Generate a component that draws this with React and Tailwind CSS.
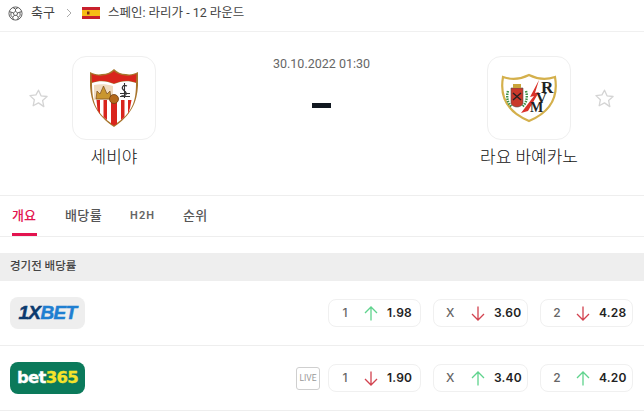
const KR = "font-['Roboto','Noto_Sans_CJK_KR',sans-serif]";

function Star() {
  return (
    <svg width="21" height="21" viewBox="0 0 24 24" fill="none" stroke="#d4d4d4" strokeWidth="1.5" strokeLinejoin="round" className="shrink-0">
      <path d="M12 2.500l2.900 6.400 6.900.8-5.100 4.700 1.400 6.900L12 17l-6.100 3.300 1.400-6.900-5.100-4.700 6.900-.8z" />
    </svg>
  );
}

function Ball() {
  return (
    <svg width="15" height="15" viewBox="0 0 24 24" fill="none" stroke="#555" strokeWidth="1.500" strokeLinejoin="round">
      <circle cx="12" cy="12" r="10.500" />
      <path d="M12 8.500l3.400 2.500-1.300 4H9.900l-1.300-4z" />
      <path d="M12 8.500V5M15.400 11l3.600-1.200M14.100 15l2.300 3M9.900 15l-2.300 3M8.600 11L5 9.800M8 2.500L12 5l4-2.500M19 9.800l2.500-.8M19 9.800l.5 5.500M5 9.800L2.500 9M5 9.800l-.5 5.500M16.400 18l3-2.700M7.600 18l-3-2.700M16.400 18l-1 4M7.600 18l1 4" />
    </svg>
  );
}

function Flag() {
  return (
    <svg width="18" height="12" viewBox="0 0 18 12" className="shrink-0">
      <rect width="18" height="12" fill="#c8202c" />
      <rect y="3" width="18" height="6" fill="#f6bd16" />
      <rect x="5" y="4.500" width="2.500" height="3" fill="#7a2a18" />
    </svg>
  );
}

function Sevilla() {
  return (
    <svg width="48" height="58" viewBox="0 0 48 58">
      <path d="M0 3c4 2 8 3 12 2 5 0 9-2 12-5 3 3 7 5 12 5 4 1 8 0 12-2 1 24-2 40-24 55C2 43-1 27 0 3z" fill="#a8752c" />
      <path d="M1.500 5c4 1.500 7 2 11 1.500 5-.5 9-2 11.500-4.500 2.500 2.500 6.500 4 11.500 4.500 4 .5 7 0 11-1.500l-.5 8.500c-8-3-15-2-22 1-7-3-14-4-22-1z" fill="#d9251d" />
      <path d="M2 14c8-3 15-2 22 1 7-3 14-4 22-1 0 18-3 30-22 42C5 44 2 32 2 14z" fill="#fff" />
      <path d="M6.500 31h3.500v14l-2.500-4zM13.500 31H17v20l-3.500-3zM21 31h6v24l-3 1.500-3-1.500zM31 31h3.500v17L31 51zM38 31h3.500l-1.500 8-2 6z" fill="#d9251d" />
      <path d="M4 16c6-1 13-1 19 1v14H4z" fill="#f0dcc0" />
      <path d="M6 30l1-8 3 3 3.500-8 3.500 8 3-3 1 8z" fill="#c9962f" stroke="#7b4a1d" strokeWidth=".7" />
      <circle cx="24" cy="30" r="4.500" fill="#b56a1b" stroke="#6e3d10" strokeWidth=".8" />
      <path d="M37 17c-4-2-6.500 2-3 4.500s3 6-2.500 5M34.500 14v15M30 24.500h10M30 27.500h10" fill="none" stroke="#333" strokeWidth="1.100" />
    </svg>
  );
}

function Rayo() {
  return (
    <svg width="56" height="50" viewBox="0 0 56 50">
      <path d="M28 2c8 4 17 5 26 2 3 17-2 34-26 44C4 38-1 21 2 4c9 3 18 2 26-2z" fill="#fff" stroke="#d4b04c" strokeWidth="2.200" />
      <path d="M7 18c-2 7 0 13 4 16M25 18c2 7 0 13-4 16" fill="none" stroke="#3b8f45" strokeWidth="2.400" strokeDasharray="1.500 1" />
      <path d="M10 15h12v15c0 2-3 4-6 4s-6-2-6-4z" fill="#c9392b" stroke="#555" strokeWidth=".6" />
      <path d="M12 27l8-7M20 27l-8-7" stroke="#222" strokeWidth="1.300" />
      <path d="M12 11h8v4h-8z" fill="#c9a33a" />
      <path d="M38 7L29 24l4-1-13 17 7-2 11-19-4 1z" fill="#d9322a" />
      <text x="40" y="20" fontFamily="Liberation Serif, serif" fontWeight="700" fontSize="17" fill="#222">R</text>
      <text x="35" y="30" fontFamily="Liberation Serif, serif" fontWeight="700" fontSize="15" fill="#222">V</text>
      <text x="29" y="39" fontFamily="Liberation Serif, serif" fontWeight="700" fontSize="14" fill="#222">M</text>
    </svg>
  );
}

function Team({ name, children }) {
  return (
    <div className="flex w-[84px] flex-col items-center">
      <div className="flex h-[84px] w-[84px] items-center justify-center rounded-[14px] border border-[#efefef] bg-white">
        {children}
      </div>
      <div className="mt-[5px] whitespace-nowrap text-[17px] font-light leading-[24px] text-[#111]">{name}</div>
    </div>
  );
}

function Arrow({ up }) {
  return up ? (
    <svg width="14" height="15" viewBox="0 0 14 15" fill="none" stroke="#5fd38d" strokeWidth="1.300">
      <path d="M7 14.500V1M1 7l6-6 6 6" />
    </svg>
  ) : (
    <svg width="14" height="15" viewBox="0 0 14 15" fill="none" stroke="#d2424f" strokeWidth="1.300">
      <path d="M7 .5V14M1 8l6 6 6-6" />
    </svg>
  );
}

function Odd({ label, up, value, wide }) {
  return (
    <div className={`flex h-[28px] items-center rounded-lg border border-[#f0f0f0] bg-white pl-[12px] ${wide ? "w-[95px]" : "w-[93px]"}`}>
      <span className="w-[8px] text-center font-['Inter',sans-serif] text-[12px] font-medium text-[#666]">{label}</span>
      <span className={wide ? "ml-[17px]" : "ml-[15px]"}><Arrow up={up} /></span>
      <span className="ml-[9px] font-['Inter',sans-serif] text-[12px] font-semibold tracking-[0.2px] text-[#222]">{value}</span>
    </div>
  );
}

function Row({ logo, live, odds }) {
  return (
    <div className="flex h-[65px] items-center border-b border-[#eeeeee] pl-[10px] pr-[11px]">
      {logo}
      <div className="flex-1" />
      {live && (
        <div className="mr-[8px] flex h-[23px] w-[24px] items-center justify-center rounded-[3px] border border-[#cfcfcf] font-['Roboto',sans-serif] text-[8.500px] text-[#999]">
          LIVE
        </div>
      )}
      <div className="flex gap-[12px]">
        <Odd {...odds[0]} />
        <Odd {...odds[1]} wide />
        <Odd {...odds[2]} />
      </div>
    </div>
  );
}

export default function App() {
  return (
    <div className={`h-[412px] w-[644px] overflow-hidden bg-white ${KR}`}>
      <div className="flex h-[32px] items-center border-b border-[#f0f0f0] pb-[5px] pl-[8px]">
        <Ball />
        <span className="ml-[8px] text-[13px] text-[#444]">축구</span>
        <svg width="8" height="10" viewBox="0 0 8 10" fill="none" stroke="#aaa" strokeWidth="1" className="ml-[10px]">
          <path d="M2 1l4 4-4 4" />
        </svg>
        <span className="ml-[9px]"><Flag /></span>
        <span className="ml-[8px] text-[12.500px] text-[#444]">스페인: 라리가 - 12 라운드</span>
      </div>

      <div className="flex h-[164px] items-start justify-between border-b border-[#eeeeee] pl-[28px] pr-[29px] pt-[24px]">
        <div className="flex items-center">
          <div className="mr-[23px] self-start pt-[32px]"><Star /></div>
          <Team name="세비야"><Sevilla /></Team>
        </div>
        <div className="flex flex-col items-center">
          <div className="text-[12.500px] leading-[16px] text-[#666]">30.10.2022 01:30</div>
          <div className="mt-[31px] h-[5px] w-[19px] bg-[#111820]" />
        </div>
        <div className="flex items-center">
          <Team name="라요 바예카노"><Rayo /></Team>
          <div className="ml-[23px] self-start pt-[32px]"><Star /></div>
        </div>
      </div>

      <div className="flex h-[41px] gap-[28px] border-b border-[#eeeeee] pl-[12px]">
        <div className="flex h-[40px] w-[25px] items-center border-b-[3px] border-[#e3134f] pt-[3px] text-[13px] font-medium text-[#e3134f]">개요</div>
        <div className="flex h-[40px] items-center text-[13px] font-medium tracking-[0.4px] text-[#555]">배당률</div>
        <div className="flex h-[40px] items-center text-[11px] font-semibold tracking-[1px] text-[#666]">H2H</div>
        <div className="flex h-[40px] items-center text-[13px] font-medium tracking-[0.4px] text-[#555]">순위</div>
      </div>

      <div className="mt-[16px] flex h-[28px] items-center bg-[#eeeeee] pl-[10px] text-[11.500px] font-medium text-[#444]">경기전 배당률</div>

      <Row
        logo={
          <div className="flex h-[32px] w-[75px] items-center justify-center rounded-lg bg-[#eeeeee] font-['Liberation_Sans',sans-serif] text-[19px] font-bold italic tracking-[-0.6px] [-webkit-text-stroke:0.5px]">
            <span className="text-[#0b3a6e]">1X</span>
            <span className="text-[#1f7fd1]">BET</span>
          </div>
        }
        odds={[
          { label: "1", up: true, value: "1.98" },
          { label: "X", up: false, value: "3.60" },
          { label: "2", up: false, value: "4.28" },
        ]}
      />
      <Row
        live
        logo={
          <div className="flex h-[32px] w-[75px] items-center justify-center rounded-lg bg-[#0b7a5b] font-['DejaVu_Sans',sans-serif] text-[16.500px] font-bold tracking-[-0.7px] [-webkit-text-stroke:0.3px]">
            <span className="text-white">bet</span>
            <span className="text-[#f5e32a]">365</span>
          </div>
        }
        odds={[
          { label: "1", up: false, value: "1.90" },
          { label: "X", up: true, value: "3.40" },
          { label: "2", up: true, value: "4.20" },
        ]}
      />
    </div>
  );
}
